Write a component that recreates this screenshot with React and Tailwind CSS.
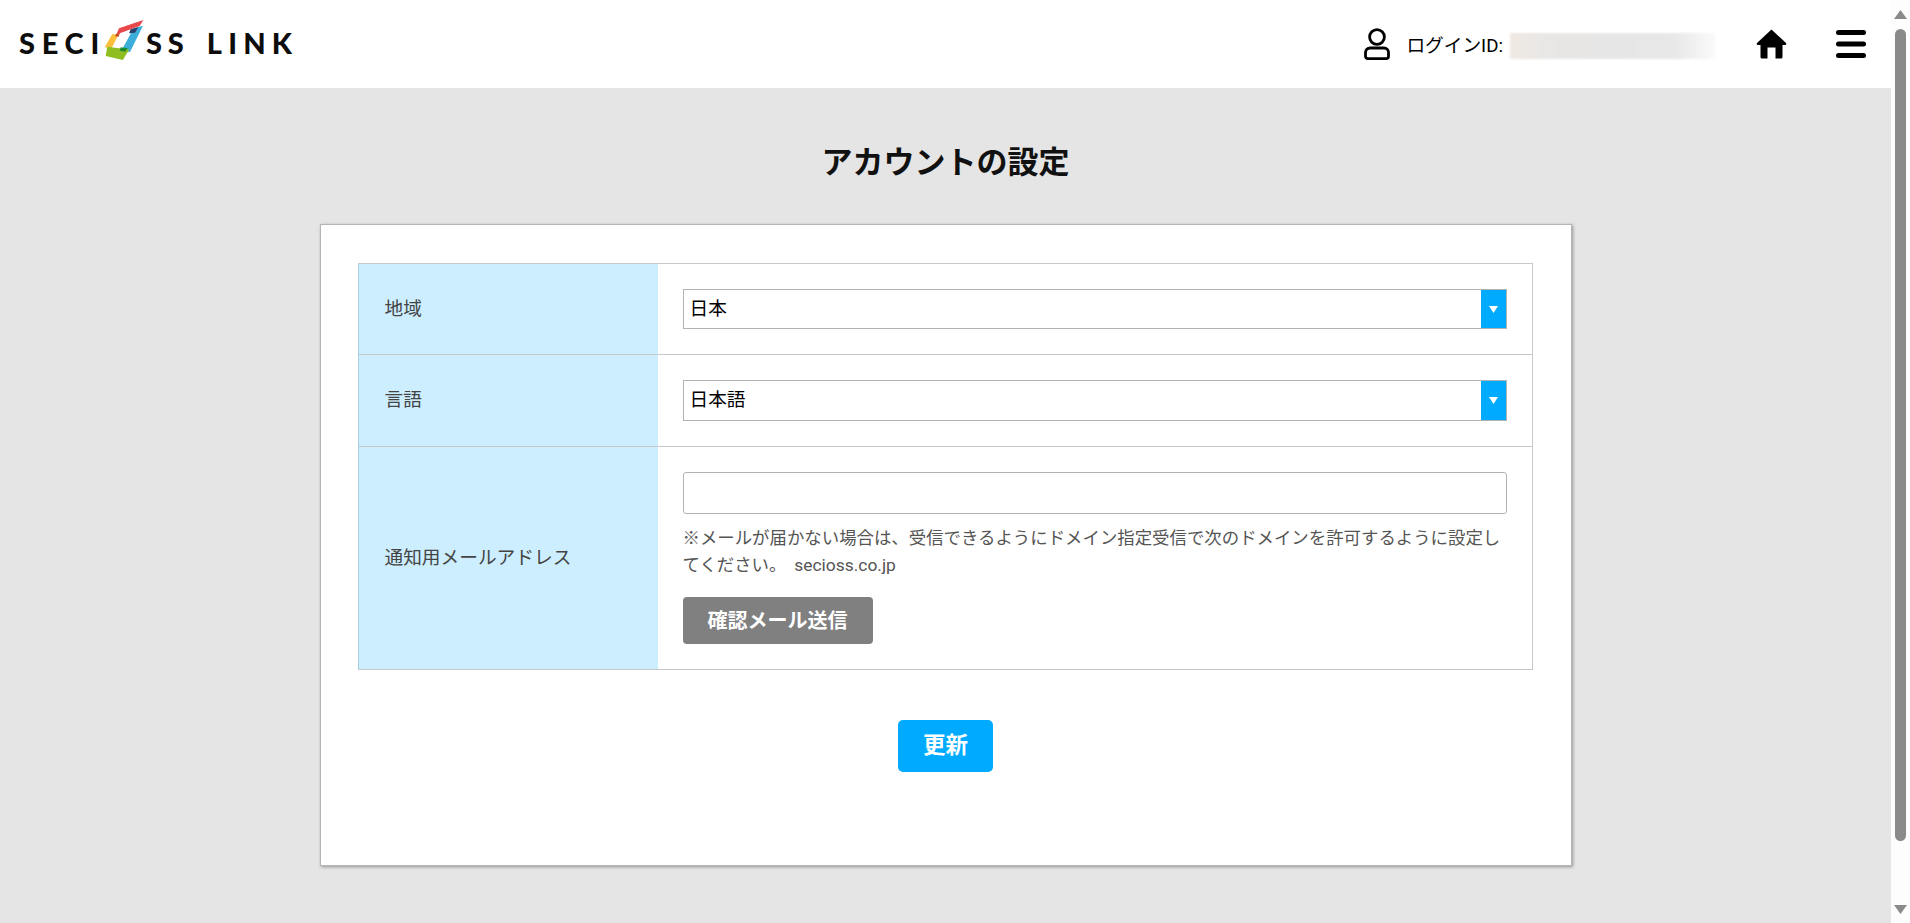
import React from "react";

function Logo() {
  return (
    <div className="flex items-center font-['Lato','Liberation_Sans',sans-serif] font-black text-[29px] leading-none text-[#0d0d0d] ml-[19px] mb-[3px]">
      <span className="tracking-[6.7px]">SECI</span>
      <svg width="41" height="41" viewBox="0 0 41 41" className="shrink-0 mb-[5px] ml-[-2px]">
        <polygon points="15,8.3 39.3,0 35.7,6 12.3,14.5" fill="#e8474c" />
        <polygon points="29.7,8.3 39,5.8 26,32 17.3,30.7" fill="#3bafda" />
        <polygon points="8.3,14 14.3,15 7.7,28 0.7,27.3" fill="#fbbf3c" />
        <polygon points="3.3,26.8 25.3,29.5 18.8,40 1.7,36" fill="#8fbe22" />
        <polygon points="26.7,9.3 34.3,7.3 31,12.7 25,13.3" fill="#2a3f6b" />
        <polygon points="16.7,27.3 23.8,28.3 21,31.7 15.7,30.7" fill="#1f8a2e" />
        <polygon points="12,14 16,12.7 14.5,17 11,16" fill="#c8502a" />
      </svg>
      <span className="tracking-[6px] ml-[1px]">SS</span>
      <span className="tracking-[6.2px] ml-[17px]">LINK</span>
    </div>
  );
}

function Select({ value, h }) {
  return (
    <div className={`flex ${h} border border-[#b3b3b3] bg-white`}>
      <div className="flex-1 flex items-center pl-[6px] text-[18.7px] text-black">{value}</div>
      <div className="w-[25px] bg-[#00aaff] flex items-center justify-center">
        <svg width="9" height="7" viewBox="0 0 9 7"><polygon points="0,0 9,0 4.5,7" fill="#fff" /></svg>
      </div>
    </div>
  );
}

function Row({ label, children, h, last, top }) {
  return (
    <div className={`flex ${h} ${last ? "" : "border-b border-[#c8c8c8]"}`}>
      <div className="w-[299px] shrink-0 bg-[#cceeff] flex items-center pl-[26px] text-[18.7px] text-[#444444]">{label}</div>
      <div className={`flex-1 px-[25px] flex flex-col ${top ? "justify-start pt-[25px]" : "justify-center"}`}>{children}</div>
    </div>
  );
}

export default function App() {
  return (
    <div className="flex h-[923px] w-[1910px] overflow-hidden bg-[#e5e5e5] font-['Roboto','Noto_Sans_CJK_JP',sans-serif]">
      <div className="flex-1 min-w-0 flex flex-col">
        <header className="h-[88px] bg-white flex items-center justify-between shrink-0">
          <Logo />
          <div className="flex items-center mr-[25px]">
            <svg width="26" height="32" viewBox="0 0 26 32" fill="none" stroke="#000" strokeWidth="2.8" className="mr-[16px]">
              <circle cx="13" cy="9" r="7.4" />
              <path d="M6 20h14a4.5 4.5 0 0 1 4.5 4.5v3.7a2.4 2.4 0 0 1-2.4 2.4H3.9a2.4 2.4 0 0 1-2.4-2.4v-3.7A4.5 4.5 0 0 1 6 20z" />
            </svg>
            <span className="text-[18.7px] text-black mt-[4px]">ログインID:</span>
            <div className="w-[205px] h-[26px] ml-[7px] mt-[5px] blur-[1px] bg-[linear-gradient(90deg,#f0e9e2_0%,#e9e7e5_15%,#e6e6e6_50%,#e8e8e8_80%,#fafafa_100%)]" />
            <svg width="31" height="30" viewBox="0 0 31 30" className="ml-[41px]">
              <path d="M15.5 0.5 L30 14 Q31 16 29 16 L26.5 16 L26.5 28 Q26.5 29.5 25 29.5 L19.5 29.5 L19.5 18.5 L11.5 18.5 L11.5 29.5 L6 29.5 Q4.5 29.5 4.5 28 L4.5 16 L2 16 Q0 16 1 14 Z" fill="#000" />
            </svg>
            <svg width="30" height="28" viewBox="0 0 30 28" className="ml-[49px]">
              <rect x="0" y="0" width="30" height="5" rx="2.5" fill="#000" />
              <rect x="0" y="11.5" width="30" height="5" rx="2.5" fill="#000" />
              <rect x="0" y="23" width="30" height="5" rx="2.5" fill="#000" />
            </svg>
          </div>
        </header>

        <main className="flex-1 flex flex-col items-center text-[#333333]">
          <h1 className="mt-[53px] mb-[39px] h-[44px] flex items-center text-[31px] font-bold text-[#111111]">アカウントの設定</h1>
          <div className="w-[1252px] h-[642px] bg-white border border-[#b5b5b5] shadow-[1px_1px_3px_rgba(0,0,0,0.35)] px-[37px] pt-[38px] shrink-0">
            <div className="w-[1175px] border border-[#c8c8c8] border-l-[#a9cfe2]">
              <Row label="地域" h="h-[91px]">
                <Select value="日本" h="h-[40px]" />
              </Row>
              <Row label="言語" h="h-[92px]">
                <Select value="日本語" h="h-[41px]" />
              </Row>
              <Row label="通知用メールアドレス" h="h-[222px]" last top>
                <div className="h-[42px] border border-[#b3b3b3] rounded-[3px] bg-white shrink-0" />
                <p className="mt-[11px] text-[17.42px] leading-[27px] text-[#555555]">
                  {"※メールが届かない場合は、受信できるようにドメイン指定受信で次のドメインを許可するように設定してください。\u2009 secioss.co.jp"}
                </p>
                <div className="mt-[18px] w-[190px] h-[47px] rounded-[4px] bg-[#808080] flex items-center justify-center text-[20px] font-bold text-white">確認メール送信</div>
              </Row>
            </div>
            <div className="mt-[50px] flex justify-center">
              <div className="w-[95px] h-[52px] rounded-[5px] bg-[#00aaff] flex items-center justify-center text-[22.5px] font-bold text-white">更新</div>
            </div>
          </div>
        </main>
      </div>

      <aside className="w-[19px] shrink-0 bg-[#fdfdfd] flex flex-col items-center">
        <svg width="13" height="9" viewBox="0 0 13 9" className="mt-[10px]"><polygon points="6.5,0 13,9 0,9" fill="#8a8a8a" /></svg>
        <div className="mt-[10px] w-[11px] h-[812px] rounded-full bg-[#8a8a8a]" />
        <svg width="13" height="9" viewBox="0 0 13 9" className="mt-[64px]"><polygon points="0,0 13,0 6.5,9" fill="#8a8a8a" /></svg>
      </aside>
    </div>
  );
}
